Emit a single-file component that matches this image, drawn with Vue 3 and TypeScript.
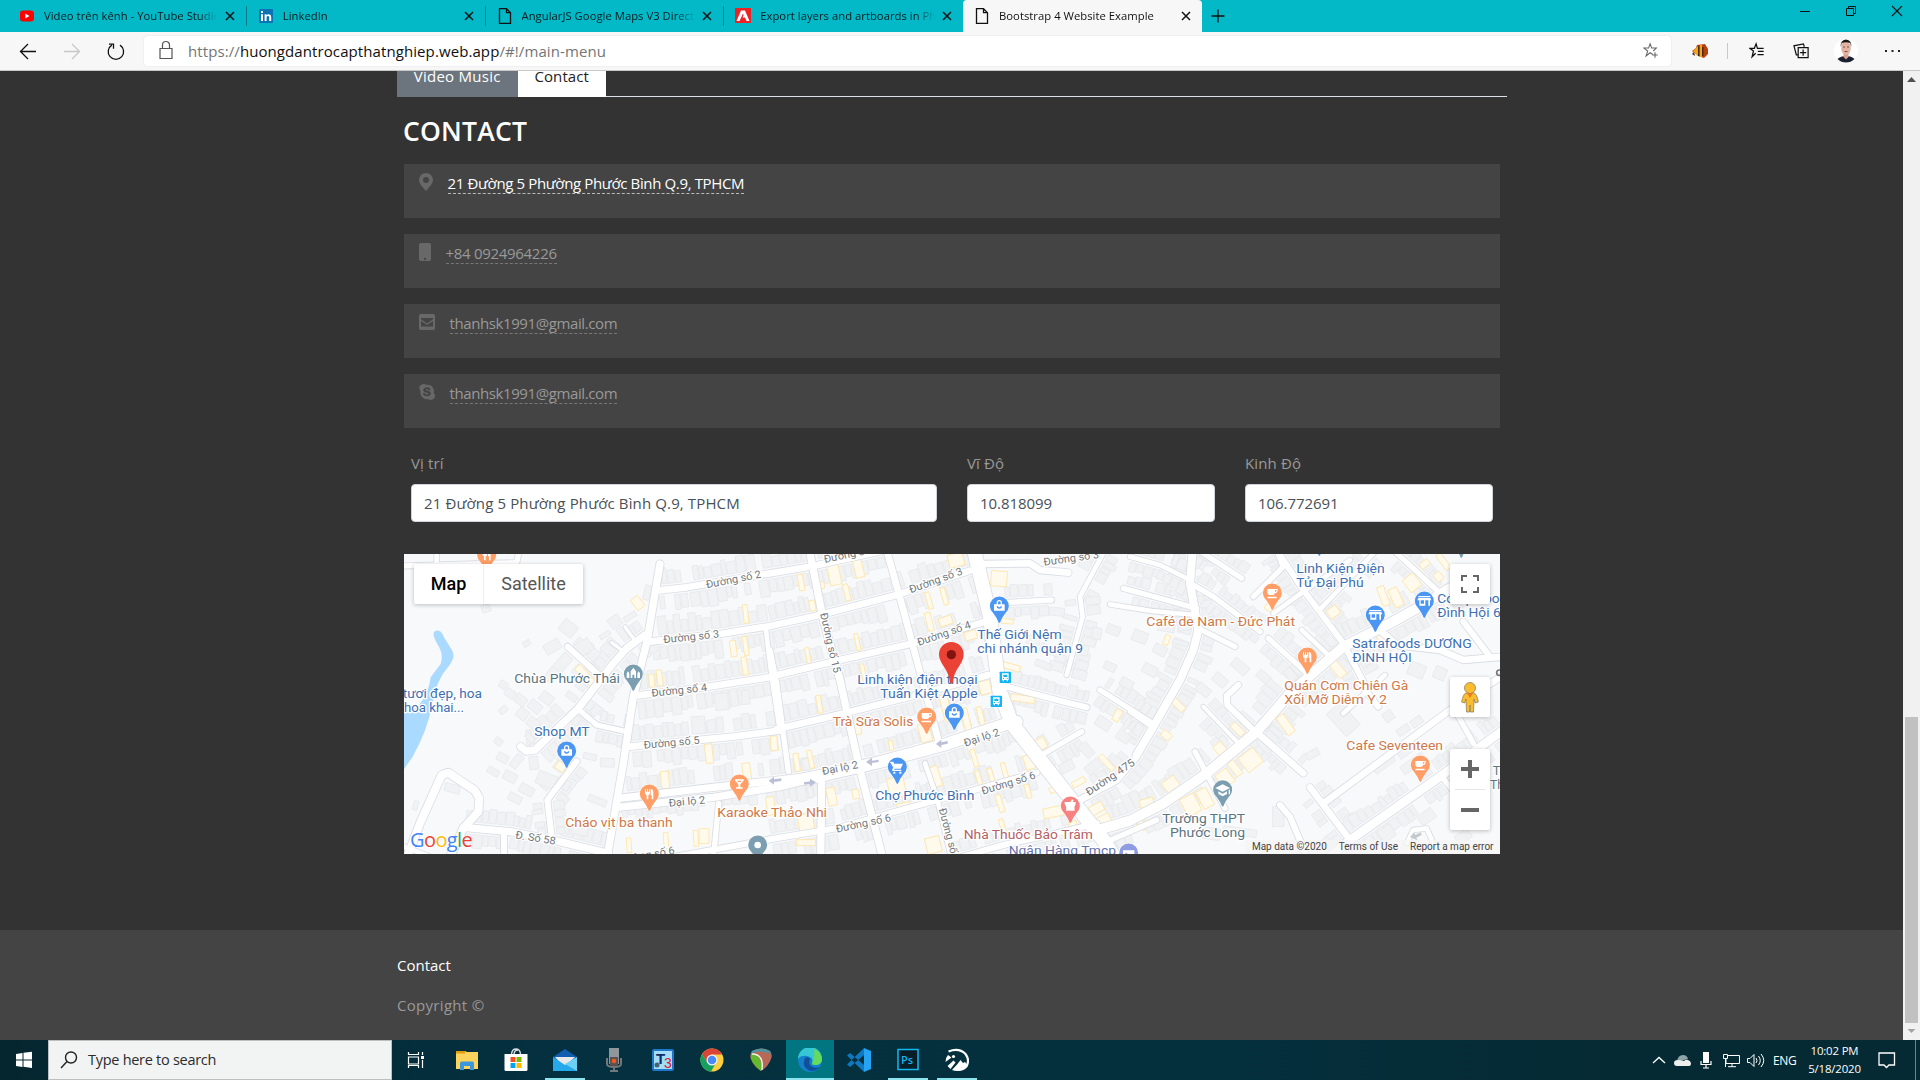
<script setup lang="ts">
type Pt = [number, number]
type Zone = 'a' | 'b' | 'c'
interface Road { pts: Pt[]; w: number; lots: number }
interface Lot { x: number; y: number; w: number; h: number; r: number; warm?: boolean }

// The map is drawn in three neighbouring zones, at three units to a pixel.
const shift: Record<Zone, number> = { a: -12, b: 1098, c: 2178 }

const road = (z: Zone, w: number, lots: number, s: string): Road => ({
  w,
  lots,
  pts: s.split(' ').map((p) => {
    const [x, y] = p.split(',').map(Number)
    return [x + shift[z], y - 12] as Pt
  }),
})

const roads: Road[] = [
  road('a', 16, 0, '0,48 350,38 358,0'),
  road('a', 14, 0, '110,0 110,44'),
  road('a', 22, 0, '780,42 765,130 742,270 700,440 670,640 620,930'),
  road('a', 20, 44, '770,122 860,112 1140,65 1240,48 1460,0'),
  road('a', 20, 48, '750,275 960,252 1110,228'),
  road('b', 20, 46, '0,228 150,195 380,135 600,62'),
  road('a', 20, 48, '705,437 880,417 1120,380'),
  road('b', 20, 44, '10,378 210,330 430,280 655,212'),
  road('a', 20, 46, '690,590 1000,560 1130,543'),
  road('b', 20, 44, '20,538 230,488 460,430 655,375'),
  road('a', 22, 46, '655,745 940,712 1140,690 1260,675'),
  road('a', 22, 0, '650,772 940,742 1140,710 1260,680'),
  road('b', 36, 42, '100,688 150,678 330,636 520,585 700,525 740,515'),
  road('a', 18, 0, '800,925 1110,868'),
  road('b', 18, 44, '0,868 200,835 400,778 620,718 800,668'),
  road('b', 18, 34, '560,925 700,885 860,850 980,820'),
  road('a', 24, 0, '20,925 60,820 125,675 145,668 225,722 238,745 235,785 190,835 150,920'),
  road('a', 22, 38, '190,832 330,845 450,868 625,910'),
  road('a', 18, 0, '312,850 312,930'),
  road('a', 14, 0, '0,885 90,920'),
  road('a', 22, 42, '362,590 378,603 405,600 535,475 640,340 680,295 735,255'),
  road('a', 18, 36, '503,290 600,378'),
  road('a', 16, 30, '535,478 590,525 685,546'),
  road('a', 18, 32, '530,634 442,750 455,860'),
  road('a', 10, 0, '675,230 700,265'),
  road('a', 10, 0, '635,278 665,300'),
  road('a', 14, 0, '1098,240 1105,300 1118,400 1140,545'),
  road('a', 16, 0, '956,760 940,925'),
  road('b', 22, 0, '118,0 160,210 210,390 265,640 340,930'),
  road('b', 20, 0, '350,0 400,180 440,330 505,570'),
  road('b', 14, 0, '465,640 500,740 545,930'),
  road('b', 16, 0, '0,300 20,400 55,665'),
  road('b', 22, 0, '155,700 152,930'),
  road('b', 42, 0, '612,0 660,200 688,420 725,520 850,680 1000,870 1045,940'),
  road('b', 20, 0, '640,42 780,40 810,60 895,68'),
  road('b', 16, 34, '700,158 845,150'),
  road('b', 18, 36, '710,410 880,455 950,472'),
  road('b', 16, 38, '820,612 935,545'),
  road('b', 16, 34, '990,420 1140,515'),
  road('b', 14, 40, '1005,0 930,140 938,200 890,375'),
  road('b', 16, 30, '1060,115 1145,138 1280,175'),
  road('b', 14, 0, '1020,163 1145,183 1280,195'),
  road('b', 20, 40, '930,750 1040,690 1100,620'),
  road('c', 24, 42, '20,615 70,530 150,390 190,300 205,240 180,100 188,0'),
  road('c', 14, 32, '0,20 90,45 180,90'),
  road('c', 16, 30, '190,105 250,140 390,245'),
  road('c', 16, 0, '205,235 315,290'),
  road('c', 16, 30, '205,0 335,85'),
  road('c', 16, 0, '370,140 460,50 440,0'),
  road('c', 18, 38, '440,0 520,120 640,280 700,395'),
  road('c', 14, 0, '430,190 520,125 660,30'),
  road('c', 14, 30, '570,178 740,0'),
  road('c', 16, 30, '790,0 920,120'),
  road('c', 16, 36, '415,265 540,378'),
  road('c', 14, 0, '515,240 600,320'),
  road('c', 14, 34, '0,485 65,530'),
  road('c', 18, 0, '325,405 290,437 292,465 375,545'),
  road('c', 20, 34, '378,545 520,670'),
  road('c', 12, 30, '220,470 335,590'),
  road('c', 16, 0, '195,605 235,680 285,775'),
  road('c', 14, 0, '640,490 765,375'),
  road('c', 18, 0, '690,400 745,470'),
  road('c', 20, 0, '580,760 960,480 1120,375'),
  road('c', 20, 34, '540,712 660,870'),
  road('c', 26, 36, '600,920 660,870 930,680 1120,540'),
  road('c', 18, 0, '450,765 480,800 535,930'),
  road('c', 14, 0, '830,880 850,840 890,835 930,925'),
  road('c', 20, 0, '750,240 800,285 930,300 1000,330 1120,320'),
  road('c', 18, 0, '1000,215 1080,320'),
  road('c', 16, 0, '935,680 1000,760'),
  road('c', 16, 0, '980,490 1030,580'),
  road('b', 30, 46, '990,838 1080,812 1180,760 1310,670 1460,545 1560,430 1720,290 1860,220 1950,170 2040,115'),
  road('b', 16, 0, '1000,880 1160,810'),
]

let seed = 11
const rnd = () => {
  seed = (seed * 16807) % 2147483647
  return seed / 2147483647
}

// Plots are laid out along both sides of every built-up street.
const lots: Lot[] = []
for (const r of roads) {
  if (!r.lots) continue
  for (let i = 1; i < r.pts.length; i++) {
    const [x1, y1] = r.pts[i - 1]
    const [x2, y2] = r.pts[i]
    const len = Math.hypot(x2 - x1, y2 - y1)
    const ux = (x2 - x1) / len
    const uy = (y2 - y1) / len
    for (const side of [-1, 1]) {
      let t = 6
      while (t < len - 12) {
        const w = 12 + rnd() * 16
        const h = r.lots * (0.7 + rnd() * 0.45)
        if (rnd() > 0.12) {
          const off = side * (r.w / 2 + 8 + h / 2)
          lots.push({
            x: x1 + ux * (t + w / 2) - uy * off,
            y: y1 + uy * (t + w / 2) + ux * off,
            w, h,
            r: (Math.atan2(uy, ux) * 180) / Math.PI,
          })
        }
        t += w + 3
      }
    }
  }
}

const block = (z: Zone, x: number, y: number, w: number, h: number, r: number, warm = false): Lot => ({
  x: x + shift[z], y: y - 12, w, h, r, warm,
})

const blocks: Lot[] = [
  block('a', 505, 235, 48, 40, 38), block('a', 457, 290, 50, 32, -30), block('a', 380, 280, 22, 16, -30),
  block('a', 550, 293, 52, 40, -32), block('a', 487, 340, 34, 60, 40), block('a', 455, 375, 30, 44, 38),
  block('a', 310, 405, 24, 22, 35), block('a', 330, 430, 30, 24, 38), block('a', 362, 450, 36, 28, 38),
  block('a', 310, 480, 26, 18, -40), block('a', 368, 492, 34, 32, 38), block('a', 400, 520, 36, 30, 38),
  block('a', 405, 470, 40, 30, 38), block('a', 440, 445, 40, 30, 38), block('a', 295, 574, 24, 20, 38),
  block('a', 308, 624, 34, 24, 30), block('a', 258, 175, 26, 22, -18), block('a', 157, 715, 46, 24, 15),
  block('a', 47, 766, 14, 28, 15), block('a', 280, 665, 36, 20, 28), block('a', 330, 680, 40, 28, 28),
  block('a', 380, 720, 44, 28, 28), block('a', 345, 745, 40, 24, 28), block('a', 622, 638, 42, 26, 2),
  block('a', 592, 752, 56, 20, 22), block('a', 570, 620, 40, 18, 12), block('a', 645, 215, 36, 34, -35),
  block('a', 690, 200, 40, 16, -32), block('a', 615, 255, 34, 14, -32), block('a', 742, 128, 20, 44, 15),
  block('a', 965, 455, 40, 50, -6), block('a', 1037, 442, 24, 42, -4), block('a', 895, 525, 40, 52, -4),
  block('a', 440, 690, 60, 40, 22), block('a', 490, 700, 42, 30, 32), block('a', 540, 840, 50, 30, 12),
  block('b', 840, 300, 60, 24, 22), block('b', 930, 300, 50, 30, 8), block('b', 790, 270, 40, 26, 12),
  block('b', 900, 345, 30, 22, 25), block('b', 820, 345, 50, 20, 22), block('b', 860, 185, 46, 24, 5),
  block('b', 1030, 240, 40, 28, 20), block('b', 980, 250, 28, 34, 10), block('b', 1000, 520, 46, 32, 32),
  block('b', 950, 600, 46, 28, 50), block('b', 890, 650, 44, 30, -28), block('b', 1060, 560, 40, 30, 32),
  block('b', 1020, 350, 36, 24, 25), block('b', 1070, 400, 40, 26, 30), block('b', 970, 650, 30, 50, 50),
  block('c', 640, 508, 90, 56, 48), block('c', 548, 612, 40, 22, -30), block('c', 775, 498, 30, 30, -35),
  block('c', 820, 540, 40, 22, -35), block('c', 860, 515, 36, 24, -35), block('c', 445, 800, 34, 60, 0),
  block('c', 330, 845, 100, 22, 8), block('c', 240, 850, 60, 34, 10), block('c', 760, 640, 70, 30, -36),
  block('c', 830, 600, 60, 26, -36), block('c', 890, 800, 50, 34, -34), block('c', 1000, 860, 46, 30, -34),
  block('c', 770, 850, 44, 40, -34), block('c', 90, 300, 40, 30, 28), block('c', 60, 360, 44, 30, 28),
  block('c', 30, 260, 44, 34, 20), block('c', 110, 230, 50, 30, 10), block('c', 330, 350, 54, 30, 40),
  block('c', 270, 390, 44, 30, 40), block('c', 220, 420, 44, 28, 40), block('c', 400, 380, 40, 26, 40),
  block('c', 860, 360, 50, 40, 22), block('c', 930, 370, 36, 36, 22), block('c', 850, 640, 80, 28, -36),
  // commercial plots
  block('a', 713, 159, 26, 38, -38, true), block('a', 1037, 192, 14, 56, -6, true),
  block('a', 1000, 296, 18, 48, -8, true), block('a', 1037, 288, 14, 58, -8, true),
  block('a', 755, 392, 16, 38, -4, true), block('a', 779, 384, 16, 48, -8, true),
  block('a', 1034, 348, 16, 54, -8, true), block('a', 557, 378, 22, 76, -42, true),
  block('a', 482, 650, 30, 24, 35, true), block('a', 927, 611, 22, 58, -6, true),
  block('a', 1124, 580, 18, 42, -6, true), block('a', 795, 690, 24, 52, -4, true),
  block('a', 1040, 664, 24, 50, -8, true), block('a', 687, 886, 14, 44, -4, true),
  block('a', 798, 872, 14, 48, -4, true), block('a', 888, 865, 14, 48, -4, true),
  block('a', 912, 858, 30, 44, 0, true), block('a', 1112, 768, 24, 54, -8, true),
  block('b', 193, 75, 34, 60, -12, true), block('b', 265, 52, 26, 62, -14, true),
  block('b', 93, 97, 16, 50, -10, true), block('b', 153, 106, 20, 20, -10, true),
  block('b', 230, 127, 16, 50, -14, true), block('b', 127, 167, 18, 32, -10, true),
  block('b', 558, 30, 46, 40, -14, true), block('b', 477, 152, 14, 52, -16, true),
  block('b', 523, 139, 14, 52, -16, true), block('b', 478, 215, 18, 56, -14, true),
  block('b', 527, 213, 40, 26, -18, true), block('b', 602, 256, 36, 26, -14, true),
  block('b', 262, 276, 12, 52, -12, true), block('b', 114, 317, 12, 48, -10, true),
  block('b', 687, 86, 48, 46, 4, true), block('b', 712, 214, 36, 14, 4, true),
  block('b', 722, 350, 58, 18, 16, true), block('b', 646, 412, 34, 40, -14, true),
  block('b', 758, 446, 72, 20, 8, true), block('b', 632, 498, 16, 56, -14, true),
  block('b', 148, 463, 14, 54, -10, true), block('b', 280, 368, 12, 52, -12, true),
  block('b', 465, 548, 34, 56, -14, true), block('b', 528, 474, 24, 80, -14, true),
  block('b', 588, 508, 20, 68, -14, true), block('b', 261, 538, 24, 32, -12, true),
  block('b', 363, 586, 12, 30, -12, true), block('b', 12, 580, 20, 44, -4, true),
  block('b', 80, 637, 16, 54, -8, true), block('b', 122, 628, 14, 54, -12, true),
  block('b', 495, 680, 30, 62, -18, true), block('b', 380, 712, 50, 60, -12, true),
  block('b', 613, 624, 14, 54, -16, true), block('b', 627, 688, 14, 52, -16, true),
  block('b', 664, 680, 14, 52, -16, true), block('b', 704, 664, 14, 52, -16, true),
  block('b', 778, 636, 30, 44, -18, true), block('b', 774, 724, 14, 42, -16, true),
  block('b', 402, 772, 40, 28, -10, true), block('b', 257, 732, 20, 28, -12, true),
  block('b', 185, 740, 26, 54, -12, true), block('b', 108, 818, 46, 50, -10, true),
  block('b', 108, 878, 58, 18, 0, true), block('b', 690, 760, 16, 54, -18, true),
  block('b', 700, 836, 14, 60, -18, true), block('b', 850, 786, 60, 30, -12, true),
  block('b', 853, 717, 30, 18, -26, true), block('b', 812, 582, 32, 34, -28, true),
  block('b', 1010, 638, 16, 58, -42, true), block('b', 926, 697, 42, 18, -28, true),
  block('b', 980, 776, 42, 28, -28, true), block('b', 1002, 810, 40, 30, -28, true),
  block('b', 1118, 824, 30, 22, -28, true), block('b', 490, 885, 44, 48, -14, true),
  block('b', 1042, 496, 20, 36, 28, true), block('b', 912, 838, 24, 50, -12, true),
  block('c', 110, 270, 16, 30, 20, true), block('c', 425, 178, 42, 20, 36, true),
  block('c', 610, 186, 34, 30, -35, true), block('c', 622, 356, 26, 58, -40, true),
  block('c', 760, 138, 22, 60, -20, true), block('c', 798, 142, 28, 58, -24, true),
  block('c', 846, 98, 40, 46, -38, true), block('c', 884, 42, 30, 18, -38, true),
  block('c', 926, 80, 22, 26, -40, true), block('c', 940, 35, 18, 56, -36, true),
  block('c', 755, 268, 20, 44, -30, true), block('c', 145, 465, 20, 44, -45, true),
  block('c', 109, 556, 30, 22, 38, true), block('c', 323, 538, 20, 44, -45, true),
  block('c', 467, 524, 26, 64, -36, true), block('c', 270, 596, 30, 34, -40, true),
  block('c', 362, 630, 56, 54, -38, true), block('c', 315, 655, 22, 50, -38, true),
  block('c', 285, 685, 40, 48, -38, true), block('c', 124, 705, 44, 42, -36, true),
  block('c', 50, 758, 42, 24, -16, true), block('c', 182, 765, 46, 58, -28, true),
  block('c', 225, 745, 34, 58, -28, true), block('c', 36, 825, 28, 24, 24, true),
]

interface Label { t: string; x: number; y: number; w: number; c?: string; r?: number }
const lb = (z: Zone, t: string, x: number, y: number, w: number, c = '', r = 0): Label => ({ t, x: x + shift[z], y: y - 12, w, c, r })
const streets: Label[] = [
  lb('a', 'Đường số 2', 920, 115, 168, '', -11), lb('a', 'Đường số 3', 791, 280, 168, '', -6),
  lb('a', 'Đường số 4', 755, 440, 168, '', -6), lb('a', 'Đường số 5', 732, 596, 168, '', -5),
  lb('a', 'Đại lộ 2', 807, 770, 110, '', -5), lb('a', 'Đ. Số 58', 345, 865, 122, '', 9),
  lb('a', 'Đường số 6', 660, 940, 168, '', -10),
  lb('b', 'Đường số 2', 164, 39, 168, '', -12), lb('b', 'Đường số 3', 422, 130, 168, '', -20),
  lb('b', 'Đường số 4', 446, 288, 168, '', -19), lb('b', 'Đường số 3', 822, 47, 168, '', -8),
  lb('b', 'Đường số 15', 150, 191, 184, '', 77), lb('b', 'Đại lộ 2', 586, 590, 110, '', -18),
  lb('b', 'Đại lộ 2', 158, 675, 110, '', -11), lb('b', 'Đường số 6', 638, 734, 168, '', -17),
  lb('b', 'Đường số 6', 200, 848, 168, '', -12), lb('b', 'Đường số 15', 506, 778, 184, '', 75),
  lb('b', 'Đường 475', 956, 738, 170, '', -34),
]
const places: Label[] = [
  lb('a', 'Chùa Phước Thái', 343, 399, 317, 'slate'), lb('a', 'tươi đẹp, hoa', 8, 444, 238, 'blue'),
  lb('a', 'hoa khai...', 12, 486, 180, 'blue'), lb('a', 'Shop MT', 403, 558, 166, 'blue'),
  lb('a', 'Cháo vịt ba thanh', 496, 831, 322, 'orange'), lb('a', 'Karaoke Thảo Nhi', 952, 801, 329, 'orange'),
  lb('b', 'Thế Giới Nệm', 622, 267, 253, 'blue'), lb('b', 'chi nhánh quận 9', 622, 309, 317, 'blue'),
  lb('b', 'Linh kiện điện thoại', 262, 402, 361, 'blue'), lb('b', 'Tuấn Kiệt Apple', 331, 444, 292, 'blue'),
  lb('b', 'Trà Sữa Solis', 188, 528, 242, 'orange'), lb('b', 'Chợ Phước Bình', 316, 750, 297, 'blue'),
  lb('b', 'Nhà Thuốc Bảo Trâm', 581, 867, 388, 'rose'), lb('b', 'Ngân Hàng Tmcp', 716, 914, 322, 'violet'),
  lb('c', 'Café de Nam - Đức Phát', 49, 228, 446, 'orange'), lb('c', 'Linh Kiện Điện', 499, 69, 265, 'blue'),
  lb('c', 'Tử Đại Phú', 499, 111, 202, 'blue'), lb('c', 'Satrafoods DƯƠNG', 667, 294, 358, 'blue'),
  lb('c', 'ĐÌNH HỘI', 667, 336, 178, 'blue'), lb('c', 'Co.op Food', 922, 159, 210, 'blue'),
  lb('c', 'Đình Hội 6', 922, 201, 190, 'blue'), lb('c', 'Quán Cơm Chiên Gà', 463, 420, 372, 'orange'),
  lb('c', 'Xối Mỡ Diễm Y 2', 463, 462, 308, 'orange'), lb('c', 'Cafe Seventeen', 649, 600, 290, 'orange'),
  lb('c', 'Trường THPT', 97, 819, 248, 'slate'), lb('c', 'Phước Long', 120, 861, 225, 'slate'),
  lb('c', 'Tr', 1088, 674, 34, 'slate'), lb('c', 'Thủ', 1080, 716, 62, 'slate'),
]

interface Pin { x: number; y: number; k: string; c: string }
const pin = (z: Zone, x: number, y: number, k: string, c: string): Pin => ({ x: x + shift[z], y: y - 12, k, c })
const pins: Pin[] = [
  pin('a', 260, 14, 'fork', '#ff9e67'), pin('a', 700, 371, 'temple', '#7b9eb0'),
  pin('a', 500, 602, 'bag', '#4b96f3'), pin('a', 748, 731, 'fork', '#ff9e67'),
  pin('a', 1018, 701, 'glass', '#ff9e67'), pin('a', 1073, 884, 'dot', '#7b9eb0'),
  pin('b', 688, 167, 'bag', '#4b96f3'), pin('b', 553, 488, 'bag', '#4b96f3'),
  pin('b', 470, 500, 'cup', '#ff9e67'), pin('b', 382, 650, 'cart', '#4b96f3'),
  pin('b', 901, 767, 'pharm', '#f88181'), pin('b', 1076, 908, 'money', '#909ce1'),
  pin('c', 427, 128, 'cup', '#ff9e67'), pin('c', 736, 194, 'shop', '#4b96f3'),
  pin('c', 883, 152, 'shop', '#4b96f3'), pin('c', 532, 320, 'fork', '#ff9e67'),
  pin('c', 871, 644, 'cup', '#ff9e67'), pin('c', 278, 718, 'school', '#7b9eb0'),
  pin('c', 568, -34, 'bag', '#4b96f3'), pin('c', 994, -28, 'dot', '#7b9eb0'),
]
const glyph: Record<string, string> = {
  fork: 'M-13-15h3v8h3v-8h3v8h3v-8h3v12q0 6-5 7v12h-5v-12q-5-1-5-7zM4-15q8 0 8 10v21h-5v-12h-3z',
  temple: 'M-20 12v-14l4-6 4 6v14zM-8 12v-20l8-11 8 11v20h-5v-10h-6v10zM12 12v-14l4-6 4 6v14z',
  bag: 'M-16-5h8v-5a8 8 0 0 1 16 0v5h8v19h-32zM-4-5h8v-5a4 4 0 0 0-8 0zM-8 1a8 7 0 0 0 16 0h-4a4 3 0 0 1-8 0z',
  cup: 'M-15-12h31v5q0 7-8 8q-2 5-7 5h-8q-8 0-8-8zM8-9v6q5 0 5-6zM-15 11h28v5h-28z',
  cart: 'M-20-16h8l3 6h26l-7 15h-18l-2 3h22v4h-26l-2-4 4-6-8-14h-3zM-12 14h6v6h-6zM6 14h6v6h-6z',
  pharm: 'M-17-12h17l5-8 5 3-3 5h9v6q-6 8-3 20h-26q3-12-4-20z',
  money: 'M-17-8h34v20h-34zM-10 2a3 3 0 1 0 6 0 3 3 0 1 0-6 0z',
  shop: 'M-18-15h36v4h-36zM-18-9h36l3 7h-4v16h-5v-16h-9v16h-18v-16h-6zM-11-2v10h10v-10z',
  glass: 'M-13-14h26v4l-10 11v9h7v4h-20v-4h7v-9l-10-11zM-7-10l3 4h8l3-4z',
  school: 'M0-16l22 11-22 11-22-11zM-13 5l13 7 13-7v8l-13 7-13-7zM18 0h4v14h-4z',
  dot: 'M-10 0a10 10 0 1 0 20 0 10 10 0 1 0-20 0z',
}
const line = (p: Pt[]) => p.map((q) => q.join(',')).join(' ')

const tabs = [
  { t: 'Video trên kênh - YouTube Studio', i: 'yt' },
  { t: 'LinkedIn', i: 'in' },
  { t: 'AngularJS Google Maps V3 Directions', i: 'doc' },
  { t: 'Export layers and artboards in Photoshop', i: 'adobe' },
  { t: 'Bootstrap 4 Website Example', i: 'doc', on: true },
]
const contacts = [
  { k: 'pin', t: '21 Đường 5 Phường Phước Bình Q.9, TPHCM' },
  { k: 'phone', t: '+84 0924964226' },
  { k: 'mail', t: 'thanhsk1991@gmail.com' },
  { k: 'skype', t: 'thanhsk1991@gmail.com' },
]
const apps = ['files', 'store', 'mail', 'mic', 't3', 'chrome', 'reaper', 'edge', 'code', 'ps', 'gallery']
const open = ['mail', 'edge', 'ps', 'gallery']
</script>

<template>
  <div class="screen">
    <header class="tabbar">
      <div class="tabs">
        <div v-for="(b, n) in tabs" :key="b.t" class="tab" :class="{ on: b.on, sep: n < 3 }">
          <svg class="fav" width="16" height="16" viewBox="0 0 16 16">
            <template v-if="b.i === 'yt'"><rect x="1" y="2.5" width="14" height="11" rx="3" fill="#f00" /><path d="M6.3 5.5v5l4.2-2.5z" fill="#fff" /></template>
            <template v-else-if="b.i === 'in'"><rect x="1" y="1" width="14" height="14" rx="1" fill="#0a72b5" /><path d="M3 6.3h2V13H3zM3 3h2v2H3zM6.6 6.3h1.9v.9c1.3-1.7 4.700-1.400 4.700 1.800v4h-2V9.500c0-2-2.600-2-2.600 0V13h-2z" fill="#fff" /></template>
            <template v-else-if="b.i === 'adobe'"><rect width="16" height="15" fill="#ed2224" /><path d="M6 2.500h4L14.500 13H11.500L10 9.500H7.500L8.600 7 8 5.500 4.500 13H1.500z" fill="#fff" /></template>
            <path v-else d="M2.500.7h7l4 4v10.600h-11zM9.500.7v4h4" fill="none" stroke="#111" stroke-width="1.300" />
          </svg>
          <span class="tab-title">{{ b.t }}</span>
          <svg class="x" width="10" height="10" viewBox="0 0 10 10"><path d="M1 1l8 8M9 1L1 9" stroke="#111" stroke-width="1.500" /></svg>
        </div>
        <svg class="plus" width="14" height="14" viewBox="0 0 14 14"><path d="M7 .5v13M.5 7h13" stroke="#111" stroke-width="1.300" /></svg>
      </div>
      <div class="win">
        <svg width="46" height="22" viewBox="0 0 46 22"><path d="M18 11.500h10" stroke="#111" /></svg>
        <svg width="46" height="22" viewBox="0 0 46 22"><path d="M18.500 8.500h7v7h-7zM20.500 8.500v-2h7v7h-2" fill="none" stroke="#111" /></svg>
        <svg width="46" height="22" viewBox="0 0 46 22"><path d="M18 6l10 10M28 6L18 16" stroke="#111" stroke-width="1.100" /></svg>
      </div>
    </header>

    <div class="toolbar">
      <svg width="44" height="38" viewBox="0 0 44 38"><path d="M20 19.500h16M28 12l-7.500 7.500L28 27" fill="none" stroke="#111" stroke-width="1.300" /></svg>
      <svg width="44" height="38" viewBox="0 0 44 38"><path d="M20 19.500h16M28 12l7.500 7.500L28 27" fill="none" stroke="#c8c8c8" stroke-width="1.300" /></svg>
      <svg width="56" height="38" viewBox="0 0 56 38"><path d="M23.800 13.100A7.700 7.700 0 1 0 32 13.100M21 12.200h4.500v4.500" fill="none" stroke="#111" stroke-width="1.300" /></svg>
      <div class="address">
        <svg width="43" height="30" viewBox="0 0 43 30"><path d="M16 12.500h12v10h-12zM18.500 12.500V9a3.500 3.500 0 0 1 7 0v3.500" fill="none" stroke="#555" stroke-width="1.200" /></svg>
        <span class="url">https://<b>huongdantrocapthatnghiep.web.app</b>/#!/main-menu</span>
        <svg class="star" width="16" height="18" viewBox="0 0 18 18"><path d="M11 13l-3-2-4.500 3.500L5.300 9 1 5.700h5.300L8 1l1.800 4.700H15L11.500 9M13.500 10.500v6M10.500 13.500h6" fill="none" stroke="#666" stroke-width="1.200" /></svg>
      </div>
      <svg class="fish" width="18" height="16" viewBox="0 0 18 16"><path d="M1 8l4-3 1-3 8-1 3 5v5l-4 4-6-2-2-2z" fill="#b8400c" /><path d="M2 8l5-5v10zM9 2h2v12H9z" fill="#f2a51b" /><path d="M1 11l3 2-1-4M14 1l2 3M11 4h1.500v9H11zM7 3h1v10H7z" fill="#4a2a12" /></svg>
      <i class="vr"></i>
      <svg class="ic1" width="16" height="18" viewBox="0 0 18 18"><path d="M7.500 11.500l-4 4L5 9 1 6h5l2-5 1.500 5h7M10 9.500h6.500M9.500 13h7" fill="none" stroke="#111" stroke-width="1.400" /></svg>
      <svg class="ic2" width="17" height="18" viewBox="0 0 18 18"><path d="M5.500 5.500h10.500v10.500h-10.500zM10.700 7.500v6.500M7.500 10.700h6.500M5.500 13L3.500 13 1 3.500 11 1.500l1 3" fill="none" stroke="#111" stroke-width="1.300" /></svg>
      <svg class="avatar" width="24" height="24" viewBox="0 0 24 24"><circle cx="12" cy="12" r="12" fill="#fff" /><path d="M3.500 20q3-3 8.500-3t8.500 3a12 12 0 0 1-17 0z" fill="#1b2130" /><path d="M9.500 14h5v4L12 20.500 9.500 18z" fill="#d9a08c" /><ellipse cx="12" cy="9" rx="4.800" ry="7" fill="#e3b3a2" /><path d="M6.800 8Q6 1 12 .5 18 1 17.200 8L16.300 4Q12 2.500 7.700 4z" fill="#1c1717" /><path d="M9 8h2M13 8h2M10.500 12.500h3" stroke="#84524a" /></svg>
      <svg class="dots" width="16" height="4" viewBox="0 0 16 4"><path d="M0 1h2v2H0zM6.500 1h2v2h-2zM13 1h2v2h-2z" fill="#222" /></svg>
    </div>

    <div class="view">
      <div class="page">
        <main>
          <nav class="pills"><span class="pill">Video Music</span><span class="pill on">Contact</span></nav>
          <section class="pane">
            <h2>CONTACT</h2>
            <div v-for="c in contacts" :key="c.k" class="card" :class="c.k">
              <svg v-if="c.k === 'pin'" width="14" height="18" viewBox="0 0 14 18"><path fill-rule="evenodd" d="M7 0a7 7 0 0 1 7 7c0 3.500-3 6-7 11C3 13 0 10.500 0 7a7 7 0 0 1 7-7zM7 4a3 3 0 1 0 0 6 3 3 0 0 0 0-6z" /></svg>
              <svg v-else-if="c.k === 'phone'" width="12" height="18" viewBox="0 0 12 18"><path fill-rule="evenodd" d="M1.700 0h8.600Q12 0 12 1.700v14.600q0 1.700-1.700 1.700H1.700Q0 18 0 16.300V1.700Q0 0 1.700 0zM6 14.800a1.100 1.100 0 1 0 0 2.200 1.100 1.100 0 0 0 0-2.200z" /></svg>
              <svg v-else-if="c.k === 'mail'" width="16" height="18" viewBox="0 0 16 18"><path fill-rule="evenodd" d="M1.700 1h12.600Q16 1 16 2.700v12.600q0 1.700-1.700 1.700H1.700Q0 17 0 15.300V2.700Q0 1 1.700 1zM2 5v1.300l6 4.200 6-4.200V5zM2 8v5.500h12V8l-6 4z" /></svg>
              <svg v-else width="16" height="18" viewBox="0 0 16 18"><path fill-rule="evenodd" d="M4.500 1q1.500 0 2.500.8 7-.8 8 6.200-.3 1.200-.1 2.200 2.100 2.800.1 5.300-2.500 2.500-5.500.8-6.700.5-8.200-6.300 0-1.200.2-2Q-.5 5 1 2.800 2.500 1 4.500 1zM11.500 6.600C11.500 3.500 4.300 3.500 4.300 6.900c0 3.200 5 2.200 5 3.800 0 1.200-2.800 1-3.200-.2-.6-1.200-2.200-.8-2 .5.400 3 7.800 3 7.800-.5 0-3.500-5.200-2.600-5.200-3.800 0-.9 2-.8 2.600.1.900 1 2.200.8 2.200-.2z" /></svg>
              <a>{{ c.t }}</a>
            </div>
            <form class="form">
              <label class="wide">Vị trí<span class="input">21 Đường 5 Phường Phước Bình Q.9, TPHCM</span></label>
              <label>Vĩ Độ<span class="input num">10.818099</span></label>
              <label>Kinh Độ<span class="input num">106.772691</span></label>
            </form>
            <div class="map">
              <svg class="canvas" width="1096" height="300" viewBox="0 0 3288 900">
                <rect width="3288" height="900" fill="#f8f9fb" />
                <path d="M0 470L40 460Q75 420 80 370L110 330Q120 300 100 270Q80 235 95 230Q112 225 120 250L145 290Q155 310 135 335Q95 380 85 450Q70 530 25 610L0 645z" fill="#aadaff" />
                <g fill="#f1f2f4" stroke="#e7e9ec" stroke-width="2.500">
                  <rect v-for="(l, n) in lots" :key="n" :x="-l.w / 2" :y="-l.h / 2" :width="l.w" :height="l.h" :transform="`translate(${l.x} ${l.y}) rotate(${l.r})`" />
                  <rect v-for="(l, n) in blocks" :key="'k' + n" :x="-l.w / 2" :y="-l.h / 2" :width="l.w" :height="l.h" :class="{ warm: l.warm }" :transform="`translate(${l.x} ${l.y}) rotate(${l.r})`" />
                </g>
                <g fill="none" stroke-linecap="round" stroke-linejoin="round">
                  <polyline v-for="(r, n) in roads" :key="n" :points="line(r.pts)" stroke="#dadde4" :stroke-width="r.w + 5" />
                  <polyline v-for="(r, n) in roads" :key="'w' + n" :points="line(r.pts)" stroke="#fff" :stroke-width="r.w" />
                </g>
                <g fill="#bcc0d6">
                  <path d="M1094 680l16-12v8l22-3v8l-22 3v8zM1386 624l18-13v9l20-3v7l-20 3v9zM1596 570l16-13v8l19-4v8l-19 4v9zM1236 685l-18-11v8l-18 3v7l18-2v8z" />
                </g>
                <path d="M3018 850l12-15 4 8 16-8 3 8-16 8 4 8z" fill="#c3cace" />
                <g class="street">
                  <text v-for="(l, n) in streets" :key="n" :textLength="l.w" lengthAdjust="spacingAndGlyphs" :transform="`translate(${l.x} ${l.y}) rotate(${l.r})`">{{ l.t }}</text>
                </g>
                <g v-for="(p, n) in pins" :key="n" :transform="`translate(${p.x} ${p.y + 1})`">
                  <path d="M-2.500 49Q-6 38-18 22A28.500 28.500 0 1 1 18 22Q6 38 2.500 49Q0 52-2.500 49z" :fill="p.c" stroke="#fff" stroke-width="3" paint-order="stroke" />
                  <path :d="glyph[p.k]" fill="#fff" fill-rule="evenodd" />
                </g>
                <g class="place">
                  <text v-for="(l, n) in places" :key="n" :x="l.x" :y="l.y" :class="l.c" :textLength="l.w" lengthAdjust="spacingAndGlyphs">{{ l.t }}</text>
                </g>
                <g v-for="b in [[1804, 370], [1777, 442]]" :key="b[0]" :transform="`translate(${b[0]} ${b[1]})`">
                  <rect x="-17" y="-17" width="34" height="34" rx="2" fill="#12b5f5" />
                  <path fill-rule="evenodd" d="M-10-12h20v20h-2v4h-4v-4h-8v4h-4v-4h-2zM-6-8v7h12v-7zM-7 2v3h3v-3zM4 2v3h3v-3z" fill="#fff" />
                </g>
                <path d="M1638 386Q1637 362 1616 332Q1605 316 1605 301A37 37 0 1 1 1679 301Q1679 316 1668 332Q1647 362 1646 386Q1642 392 1638 386z" fill="#ea4335" />
                <circle cx="1642" cy="302" r="14" fill="#811411" />
                <circle cx="3286" cy="356" r="8" fill="none" stroke="#777" stroke-width="5" />
              </svg>
              <div class="types"><span>Map</span><span>Satellite</span></div>
              <div class="glogo"><span>G</span><span>o</span><span>o</span><span>g</span><span>l</span><span>e</span></div>
              <div class="ctl full"><svg width="18" height="18" viewBox="0 0 18 18"><path d="M0 6V0h6v2H2v4zM12 0h6v6h-2V2h-4zM18 12v6h-6v-2h4v-4zM6 18H0v-6h2v4h4z" fill="#666" /></svg></div>
              <div class="ctl peg"><svg width="18" height="31" viewBox="0 0 18 31"><path d="M5 11Q2 12 .7 20l3 1 1.300-4 .5 13h3l.5-7 .5 7h3l.5-13 1.300 4 3-1Q16 12 13 11z" fill="#fbbc2e" stroke="#8b8061" stroke-width=".8" /><circle cx="9" cy="6" r="5.500" fill="#fbbc2e" stroke="#8b8061" stroke-width=".8" /><path d="M6 11h6l-3 5z" fill="#e57c24" /></svg></div>
              <div class="ctl zoom"><svg width="18" height="18" viewBox="0 0 18 18"><path d="M7 0h4v7h7v4h-7v7H7v-7H0V7h7z" fill="#666" /></svg><i></i><svg width="18" height="18" viewBox="0 0 18 18"><path d="M0 7h18v4H0z" fill="#666" /></svg></div>
              <div class="credits"><span>Map data ©2020</span><span>Terms of Use</span><span>Report a map error</span></div>
            </div>
          </section>
        </main>
        <footer><p class="strong">Contact</p><p class="copy">Copyright ©</p></footer>
      </div>
      <div class="scroll">
        <svg width="17" height="17" viewBox="0 0 17 17"><path d="M4 11l4.500-5 4.500 5z" fill="#505050" /></svg>
        <i></i>
        <svg width="17" height="17" viewBox="0 0 17 17"><path d="M4.500 6l4 4 4-4z" fill="#a3a3a3" /></svg>
      </div>
    </div>

    <div class="taskbar">
      <svg width="48" height="40" viewBox="0 0 48 40"><path d="M16 14l6.500-1v6.500H16zM23.500 12.800L32 11.700v7.800h-8.500zM16 20.500h6.500V27L16 26zM23.500 20.500H32V28l-8.500-1.200z" fill="#fff" /></svg>
      <div class="search"><svg width="18" height="18" viewBox="0 0 18 18"><path d="M1 17l6-6.500" stroke="#222" stroke-width="1.400" /><circle cx="11" cy="6.500" r="5.500" fill="none" stroke="#222" stroke-width="1.400" /></svg><span>Type here to search</span></div>
      <svg class="tv" width="48" height="40" viewBox="0 0 48 40"><path d="M16.500 12v2.500h10V12M16.500 17h10v7h-10zM16.500 28v-2.500h10V28M30.500 12v3M30.500 20v8" fill="none" stroke="#fff" stroke-width="1.200" /><path d="M29 16h3v3h-3z" fill="#fff" /></svg>
      <div class="apps">
        <div v-for="a in apps" :key="a" class="app" :class="{ open: open.includes(a), cur: a === 'edge' }">
          <svg width="24" height="24" viewBox="0 0 24 24">
            <template v-if="a === 'files'"><path d="M1 3h9l2 1h11v17H1z" fill="#ffd45c" /><path d="M1 3h9v2.500H1z" fill="#e29c0c" /><path d="M5 22v-7l1-1.500h12l1 1.500v7h-4v-4H9v4z" fill="#3a97dd" /></template>
            <template v-else-if="a === 'store'"><path d="M.5 6h23v15.500q0 1.500-1.500 1.500H2Q.5 23 .5 21.500z" fill="#fff" /><path d="M7.500 6Q8 1 12 1t4.500 5M10 6q.5-4 4-4" fill="none" stroke="#d4dcdf" stroke-width="1.400" /><path d="M6.500 9h5v5h-5z" fill="#f25022" /><path d="M12.500 9h5v5h-5z" fill="#7fba00" /><path d="M6.500 15h5v5h-5z" fill="#00a4ef" /><path d="M12.500 15h5v5h-5z" fill="#ffb900" /></template>
            <template v-else-if="a === 'mail'"><path d="M0 9l12-8 12 8v3H0z" fill="#0f5eb0" /><path d="M2 9h20l-8 8H9z" fill="#e9e9e9" /><path d="M0 9l12 8L24 9v14H0z" fill="#25a9ea" /><path d="M24 9v14L12 16z" fill="#6ccff5" /></template>
            <template v-else-if="a === 'mic'"><path d="M7 0h10v16H7z" fill="#8f979c" /><path d="M5 10v6q0 3 7 3t7-3v-6M12 19v4M8 23h8" fill="none" stroke="#70787c" stroke-width="2" /><path d="M8 9h8v9H8z" fill="#59524f" /><circle cx="12" cy="13" r="2.300" fill="#f05a22" /></template>
            <template v-else-if="a === 't3'"><rect x="1" y="1" width="22" height="22" rx="2" fill="#1d78cc" /><rect x="3" y="3" width="18" height="18" fill="#a6dcf6" /><circle cx="6" cy="17" r="2.500" fill="#3f6575" /><text x="5" y="16" class="tbig">T</text><text x="13" y="20" class="three">3</text></template>
            <template v-else-if="a === 'chrome'"><circle cx="12" cy="12" r="11.500" fill="#ffcd40" /><path d="M2 6A11.500 11.500 0 0 1 22 6.500H12l-5 8z" fill="#dc4437" /><path d="M2 6A11.500 11.500 0 0 0 11 23.500L16.500 14l-9 1z" fill="#14a15f" /><circle cx="12" cy="12" r="5.500" fill="#f4f4f4" /><circle cx="12" cy="12" r="4.300" fill="#4a8af4" /></template>
            <template v-else-if="a === 'reaper'"><path d="M3 3q9-5 18 0 3 4 1 8-3 8-10 12Q4 18 1.500 10 1 6 3 3z" fill="#b76857" /><path d="M2 5q-2 9 10 18 1-9-2-13T2 5z" fill="#63ba2c" /><path d="M3 3q9-5 18 0l1 3Q9 1 2 6z" fill="#4f92a0" /><path d="M3 6q12 0 10 16" fill="none" stroke="#eee" stroke-width="1.500" /></template>
            <template v-else-if="a === 'edge'"><circle cx="12" cy="12" r="12" fill="#1480ca" /><path d="M0 11A12 12 0 0 1 24 11q0 6-7 6-4 0-2.500-3Q15 9 9 8 3 7 0 11z" fill="#36c7d7" /><path d="M16 1a12 12 0 0 1 8 11q-1 5-7 5-4 0-2.500-3Q17 9 16 1z" fill="#66da5c" /><path d="M7 10q-4 10 6 13 5 0 9-4-6 2-9-1-3-2-1-7-2-3-5-1z" fill="#124f9a" /></template>
            <template v-else-if="a === 'code'"><path d="M17 0l7 3v18l-7 3z" fill="#24a4f2" /><path d="M17 0v7L3 19l-3-2.500zM17 24v-7L3 5 0 7.500z" fill="#0e78c0" /></template>
            <template v-else-if="a === 'ps'"><path d="M2 1.500h20v20H2z" fill="#071d27" stroke="#10b9ee" stroke-width="1.500" /><text x="5" y="16" class="pst">Ps</text></template>
            <template v-else><path d="M3.500 3.500Q14-.5 20.500 6q4.500 6 1 12" fill="none" stroke="#fff" stroke-width="2.200" /><path d="M.5 14Q.5 9.500 3 7l3.500 2.500zM2.500 18l6-5.500 2 2L5.500 21zM7 22l5.500-6 3-4 2.500 3 2-1 3 4q-3 5-10 5-4 0-6-1z" fill="#fff" /><circle cx="8.500" cy="8.500" r="1.600" fill="#fff" /></template>
          </svg>
        </div>
      </div>
      <div class="tray">
        <svg width="14" height="8" viewBox="0 0 14 8"><path d="M1 7l6-5.500L13 7" fill="none" stroke="#fff" stroke-width="1.300" /></svg>
        <svg class="cloud" width="17" height="12" viewBox="0 0 17 12"><path d="M3 7Q4 1 9 1q4 0 5 4l-4 1z" fill="#8da3a7" /><path d="M3 12Q0 12 0 9q0-3 4-3 4 0 6 1 2-2 4-1 3 1 3 4 0 2-2 2z" fill="#eee" /></svg>
        <svg class="tm" width="12" height="17" viewBox="0 0 12 17"><path d="M3 0h6v11H3z" fill="#fff" /><path d="M1 9v3.500h10V9M6 13v3M3 16h6" fill="none" stroke="#fff" stroke-width="1.200" /></svg>
        <svg class="net" width="17" height="15" viewBox="0 0 17 15"><path d="M5 2.500h11.500v8H3V6M.5 1.500h4v4h-4zM9 10.500v3M5 13.700h8M2.500 5v9" fill="none" stroke="#fff" /></svg>
        <svg class="spk" width="18" height="15" viewBox="0 0 18 15"><path d="M.5 5.500h2.500l4-4v12l-4-4H.5zM9 5q2 2.500 0 5M11.500 3q3.500 4.500 0 9M14 1q5.500 6.500 0 13" fill="none" stroke="#fff" /></svg>
        <span class="eng">ENG</span>
        <div class="clock"><span>10:02 PM</span><span>5/18/2020</span></div>
        <svg class="note" width="18" height="17" viewBox="0 0 18 17"><path d="M1 1h15.500v12H11l-2.500 2.500L6 13H1z" fill="none" stroke="#fff" stroke-width="1.300" /></svg>
        <i class="edge-line"></i>
      </div>
    </div>
  </div>
</template>

<style>
body { margin: 0; overflow: hidden; background: #333; }
</style>

<style scoped>
* { box-sizing: border-box; }
.screen { width: 1920px; height: 1080px; display: flex; flex-direction: column; overflow: hidden; font-family: "Open Sans", "Noto Sans", sans-serif; font-size: 15px; }
svg { display: block; flex: none; }
.tabbar { height: 32px; background: #03b8c7; display: flex; justify-content: space-between; padding-left: 8px; flex: none; }
.tabs { display: flex; align-items: center; }
.tab { width: 238.75px; height: 32px; display: flex; align-items: center; padding: 0 11px; font-size: 11.25px; color: #0b1a1c; flex: none; }
.tab.sep { border-right: 1px solid #087d88; height: 20px; }
.tab.on { background: #f7f7f7; border-radius: 4px 4px 0 0; color: #111; }
.tab-title { width: 175px; margin-left: 9px; white-space: nowrap; overflow: hidden; line-height: 18px; letter-spacing: 0.03px; -webkit-mask-image: linear-gradient(90deg, #000 155px, transparent); mask-image: linear-gradient(90deg, #000 155px, transparent); }
.x { margin-left: 7.5px; }
.plus { margin-left: 9.500px; }
.win { display: flex; }
.toolbar { height: 39px; flex: none; background: #f7f7f7; border-bottom: 1px solid #c9cac8; display: flex; align-items: center; }
.address { width: 1527px; height: 30px; background: #fff; border-radius: 4px; display: flex; align-items: center; box-shadow: 0 0 2px #ddd; }
.url { font-size: 15px; letter-spacing: 0.090px; padding-left: 1px; color: #757575; flex: 1; line-height: 22px; white-space: nowrap; }
.url b { font-weight: 400; color: #101010; }
.star { margin-right: 12px; }
.fish { margin-left: 20px; }
.vr { width: 1px; height: 16px; background: #c8c8c8; margin-left: 18px; }
.ic1 { margin-left: 21px; }
.ic2 { margin-left: 28px; }
.avatar { margin-left: 24px; }
.dots { margin-left: 27px; }
.view { height: 969px; display: flex; flex: none; }
.page { width: 1903px; background: #333; color: #999; }
main { width: 1110px; height: 859px; margin-left: 397px; overflow: hidden; }
.pills { height: 26px; border-bottom: 1px solid #dee2e6; display: flex; align-items: flex-start; }
.pill { height: 26px; background: #6c757d; color: #fff; line-height: 10px; width: 120.500px; text-align: center; letter-spacing: 0.280px; }
.pill.on { width: 88.500px; background: #fff; color: #222; letter-spacing: 0.1px; }
.pane { padding: 16px 7px 0; }
h2 { margin: 0 0 16px; height: 35px; line-height: 37px; font-size: 26.500px; font-weight: 600; color: #fff; letter-spacing: 0.2px; text-indent: -1px; }
.card { height: 54px; margin-bottom: 16px; background: #444; padding: 9px 15px; display: flex; align-items: flex-start; }
.card svg { fill: #686868; }
.card a { line-height: 21px; height: 21px; border-bottom: 1px dashed #777; margin-left: 14.500px; white-space: nowrap; letter-spacing: -0.360px; }
.card.phone a { letter-spacing: -0.300px; }
.card.mail a, .card.skype a { letter-spacing: -0.400px; }
.card.pin a { color: #fff; border-color: #bbb; }
.form { display: flex; padding: 7px 7px 0; gap: 30px; height: 110px; letter-spacing: 0.130px; }
label { width: 248px; display: block; line-height: 25px; }
label.wide { width: 526px; }
.input { display: block; height: 38px; margin-top: 8px; background: #fff; border: 1px solid #ced4da; border-radius: 4px; color: #495057; padding: 0 12px; line-height: 36px; white-space: nowrap; }
.num { letter-spacing: -0.050px; }
.map { position: relative; width: 1096px; height: 300px; overflow: hidden; font-family: Roboto, sans-serif; }
.warm { fill: #fffaeb; stroke: #fde5a8; }
text { font-family: Roboto, sans-serif; font-size: 41px; paint-order: stroke; stroke: #fff; stroke-width: 8px; stroke-linejoin: round; }
.street text { font-size: 32px; fill: #72777b; }
.blue { fill: #3d70b2; }
.orange { fill: #cf7848; }
.slate { fill: #5a7582; }
.rose { fill: #b65f66; }
.violet { fill: #6874b0; }
.types { position: absolute; left: 10px; top: 10px; height: 40px; display: flex; background: #fff; border-radius: 2px; box-shadow: 0 1px 4px rgba(0, 0, 0, .25); font-size: 18px; line-height: 40px; color: #565656; }
.types span { width: 99px; text-align: center; }
.types span:first-child { width: 70px; color: #000; font-weight: 500; border-right: 1px solid #eee; }
.glogo { position: absolute; left: 6px; top: 274px; font: 500 20px/24px "Open Sans", sans-serif; letter-spacing: -0.600px; text-shadow: 0 0 2px #fff; }
.glogo span { color: #4285f4; }
.glogo span:nth-child(2), .glogo span:nth-child(6) { color: #ea4335; }
.glogo span:nth-child(3) { color: #fbbc05; }
.glogo span:nth-child(5) { color: #34a853; }
.ctl { position: absolute; right: 10px; width: 40px; height: 40px; background: #fff; border-radius: 2px; box-shadow: 0 1px 4px rgba(0, 0, 0, .25); display: flex; flex-direction: column; align-items: center; justify-content: center; }
.full { top: 10px; }
.peg { top: 123px; }
.zoom { top: 195px; height: 81px; justify-content: space-between; padding: 11px 0; }
.zoom i { width: 30px; height: 1px; background: #e6e6e6; }
.credits { position: absolute; right: 0; bottom: 0; height: 14px; display: flex; gap: 12px; padding: 0 6.500px; background: rgba(245, 245, 245, .7); font-size: 10px; line-height: 14px; color: #444; white-space: nowrap; }
footer { height: 110px; background: #444; padding: 23px 0 0 397px; }
footer p { margin: 0 0 16px; line-height: 24px; }
footer .strong { color: #fff; }
footer .copy { letter-spacing: 0.300px; }
.scroll { width: 17px; background: #f1f1f1; display: flex; flex-direction: column; }
.scroll i { width: 13px; height: 306px; margin: auto 2px 0; background: #c1c1c1; }
.taskbar { height: 40px; flex: none; display: flex; background: linear-gradient(90deg, #05262f, #04303f 28%, #04303e 60%, #052a33 85%); color: #fff; }
.search { width: 344px; border: 1px solid #bbbfbf; background: #f2f4f4; color: #2b2b2b; display: flex; align-items: center; padding-left: 11px; }
.search span { margin-left: 10px; line-height: 24px; font-size: 14.500px; letter-spacing: -0.280px; }
.tv { margin-right: 3px; }
.apps { display: flex; gap: 1px; }
.app { width: 48px; height: 40px; display: flex; align-items: center; justify-content: center; }
.app.open { background: linear-gradient(#8ce4ef, #8ce4ef) center bottom / 40px 2px no-repeat; }
.app.cur { background: linear-gradient(#8ce4ef, #8ce4ef) center bottom / 48px 2px no-repeat #017580; }
text.tbig { font: 900 15px "Liberation Sans", sans-serif; fill: #0d2d68; stroke: none; }
text.three { font: 14px "Liberation Sans", sans-serif; fill: #d5212c; stroke: none; }
text.pst { font: 600 11px "Open Sans", sans-serif; fill: #10b9ee; stroke: none; }
.tray { margin-left: auto; display: flex; align-items: center; height: 40px; }
.cloud { margin-left: 8px; }
.tm { margin-left: 9px; }
.net { margin-left: 10.500px; }
.spk { margin-left: 7px; }
.eng { margin-left: 8.500px; width: 24px; font-size: 12px; letter-spacing: -0.400px; }
.clock { width: 75px; display: flex; flex-direction: column; font-size: 11.400px; line-height: 18px; text-align: center; letter-spacing: -0.150px; }
.note { margin-left: 6px; }
.edge-line { width: 1px; height: 40px; background: #6d8589; margin: 0 4px 0 19px; }
</style>
